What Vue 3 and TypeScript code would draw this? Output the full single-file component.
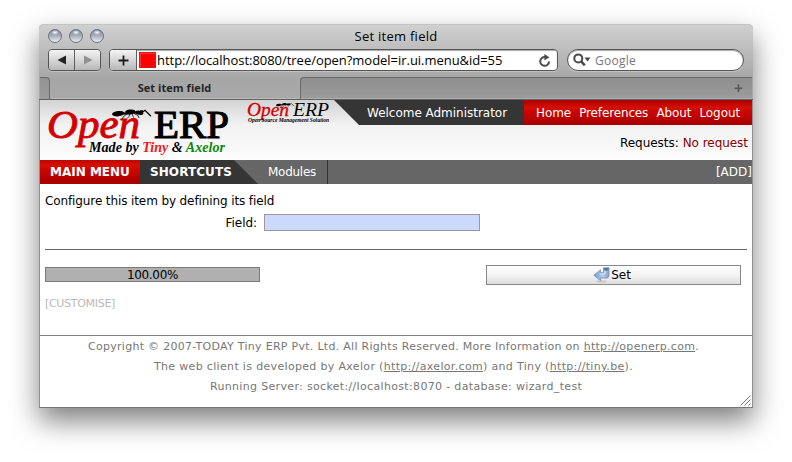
<script setup lang="ts">
import { ref } from 'vue'

interface NavLink { label: string; spacing: string }

const address = 'http://localhost:8080/tree/open?model=ir.ui.menu&id=55'
const links: NavLink[] = [
  { label: 'Home', spacing: 'home' },
  { label: 'Preferences', spacing: 'prefs' },
  { label: 'About', spacing: 'about' },
  { label: 'Logout', spacing: 'logout' },
]
const field = ref('')
const progress = ref(100)
</script>

<template>
  <div class="desktop">
    <div class="window">
      <header class="chrome">
        <div class="titlebar">
          <div class="lights"><i v-for="n in 3" :key="n" class="light"></i></div>
          <div class="title">Set item field</div>
        </div>
        <div class="toolbar">
          <div class="history">
            <button class="tool" aria-label="Back">
              <svg width="10" height="10" viewBox="0 0 10 10"><path d="M9 .6v8.8L.5 5z" fill="#222" /></svg>
            </button>
            <button class="tool forward" aria-label="Forward">
              <svg width="10" height="10" viewBox="0 0 10 10"><path d="M1 .6v8.8L9.5 5z" fill="#929292" /></svg>
            </button>
          </div>
          <div class="location">
            <button class="tool add" aria-label="Add bookmark">
              <svg width="11" height="11" viewBox="0 0 11 11"><path d="M5.5.5v10M.5 5.5h10" stroke="#1c1c1c" stroke-width="1.8" /></svg>
            </button>
            <div class="url">
              <i class="favicon"></i>
              <span class="address">{{ address }}</span>
              <svg class="reload" width="12" height="13" viewBox="0 0 12 13">
                <path d="M10 7.4A4.400 4.400 0 1 1 6.200 3.100" fill="none" stroke="#4d4d4d" stroke-width="2" />
                <path d="M5.400 0l5 3.200-5 3.200z" fill="#4d4d4d" />
              </svg>
            </div>
          </div>
          <div class="search">
            <svg width="18" height="14" viewBox="0 0 18 14">
              <circle cx="5.300" cy="5.400" r="4" fill="none" stroke="#4a4a4a" stroke-width="2" />
              <path d="M8.200 8.400l3.600 4" stroke="#4a4a4a" stroke-width="2.400" />
              <path d="M11.500 4.400h6l-3 4z" fill="#4a4a4a" />
            </svg>
            <span>Google</span>
          </div>
        </div>
        <div class="tabs">
          <div class="tab-edge"></div>
          <div class="tab">Set item field</div>
          <div class="tab-rest">
            <svg width="9" height="9" viewBox="0 0 9 9"><path d="M4.500 1v8M.5 5h8" stroke="#c4c4c4" stroke-width="2" /><path d="M4.500.5v8M.5 4.500h8" stroke="#585858" stroke-width="2" /></svg>
          </div>
        </div>
      </header>

      <section class="banner">
        <svg class="logo" width="294" height="60" viewBox="0 0 294 60">
          <g class="serif">
            <text x="7" y="38" class="big open" textLength="93" lengthAdjust="spacingAndGlyphs">Open</text>
            <text x="114" y="38" class="big erp" textLength="75" lengthAdjust="spacingAndGlyphs">ERP</text>
            <text x="49" y="52" class="made" textLength="136" lengthAdjust="spacingAndGlyphs">Made by <tspan fill="#f01818">Tiny</tspan> &amp; <tspan fill="#0a8a0a">Axelor</tspan></text>
            <text x="207" y="16" class="small open" textLength="42" lengthAdjust="spacingAndGlyphs">Open</text>
            <text x="253" y="16" class="small" textLength="36" lengthAdjust="spacingAndGlyphs">ERP</text>
            <text x="208" y="22" class="tagline" textLength="81" lengthAdjust="spacingAndGlyphs">Open Source Management Solution</text>
          </g>
          <defs>
            <g id="ant">
              <ellipse cx="6.200" cy="4.200" rx="6.200" ry="2.700" transform="rotate(-6 6 4)" />
              <ellipse cx="18.300" cy="2.500" rx="5.200" ry="2.500" transform="rotate(-5 18 2.500)" />
              <ellipse cx="27.300" cy="3.200" rx="4.200" ry="2.100" transform="rotate(10 27 3)" />
              <path d="M11 4h4M22 3h3" fill="none" stroke="#000" stroke-width="2" />
              <path d="M29 3.800l4-3 6 6M28 1.500h3" fill="none" stroke="#000" stroke-width="1.300" />
              <path d="M16 4l-4 2.500-2 3M18 4l-1 3-2 2M20 4l1.500 4M22 4l4 2 1 2.500" fill="none" stroke="#000" stroke-width=".8" />
            </g>
          </defs>
          <use href="#ant" transform="translate(72 9.500)" />
          <use href="#ant" transform="translate(236 3) scale(.46)" />
        </svg>
        <div class="account">
          <div class="top-row">
            <div class="welcome">Welcome Administrator</div>
            <nav class="links"><a v-for="l in links" :key="l.label" :class="l.spacing">{{ l.label }}</a></nav>
          </div>
          <div class="requests"><span>Requests:</span><a>No request</a></div>
        </div>
      </section>

      <nav class="menu">
        <div class="main-menu">MAIN MENU</div>
        <div class="shortcuts">SHORTCUTS</div>
        <div class="modules">Modules</div>
        <div class="add-link">[ADD]</div>
      </nav>

      <main class="content">
        <p class="intro">Configure this item by defining its field</p>
        <div class="form-row">
          <label for="field">Field:</label>
          <input id="field" v-model="field" type="text" />
        </div>
        <hr />
        <div class="actions">
          <div class="progress"><div class="bar" :style="{ width: progress + '%' }">{{ progress.toFixed(2) }}%</div></div>
          <button class="set">
            <svg width="17" height="16" viewBox="0 0 17 16">
              <defs><linearGradient id="arrow" x1="0" y1="0" x2="1" y2="0"><stop offset="0" stop-color="#6f9ccd" /><stop offset=".6" stop-color="#b3cde8" /><stop offset="1" stop-color="#7fa3cb" /></linearGradient></defs>
              <ellipse cx="8.500" cy="14.500" rx="5.500" ry="1.300" fill="#ccc" />
              <path d="M10.500.8h5.500v8.400l-1.500 1.800H7.500v2.600L.8 8.200 7.500 2.900v2.800h3z" fill="url(#arrow)" stroke="#6d8fb5" stroke-width=".8" />
              <path d="M10.800 1h5l-.8 2.600h-3.700z" fill="#54779f" />
              <path d="M12 4v3H7" fill="none" stroke="#dceaf7" stroke-width="1" />
            </svg>
            <span>Set</span>
          </button>
        </div>
        <a class="customise">[CUSTOMISE]</a>
      </main>

      <footer class="footer">
        <div class="copy">Copyright © 2007-TODAY Tiny ERP Pvt. Ltd. All Rights Reserved. More Information on <a>http://openerp.com</a>.</div>
        <div class="dev">The web client is developed by Axelor (<a>http://axelor.com</a>) and Tiny (<a>http://tiny.be</a>).</div>
        <div class="server">Running Server: socket://localhost:8070 - database: wizard_test</div>
        <svg class="grip" width="11" height="11" viewBox="0 0 11 11"><path d="M.5 10.500l10-10M4.500 10.500l6-6M8.500 10.500l2-2" stroke="#777" stroke-width="1" /></svg>
      </footer>
    </div>
  </div>
</template>

<style>
body { background: #fff; overflow: hidden; }
</style>

<style scoped>
* { box-sizing: border-box; }
.desktop { width: 792px; height: 462px; padding: 24px 39px 0; overflow: hidden; }
.window {
  width: 714px; height: 384px; display: flex; flex-direction: column;
  border: 1px solid #919191; border-top: 0; border-bottom-color: #777;
  border-radius: 5px 5px 0 0; background: #fff; color: #000;
  font: 12px/16px "DejaVu Sans", sans-serif;
  box-shadow: 0 13px 28px rgba(0, 0, 0, .5);
}
.chrome {
  height: 76px; margin: 0 -1px; padding: 0 1px; font-family: "Open Sans", sans-serif;
  background: linear-gradient(#d0d0d0, #a6a6a6 54px, #a9a9a9);
  border-top: 1px solid #c4c4c4; border-bottom: 1px solid #626262;
  border-radius: 5px 5px 0 0; flex: none;
}
.titlebar { height: 24px; display: grid; grid-template-columns: 64px 1fr 64px; align-items: center; }
.lights { display: flex; gap: 7px; padding: 0 0 2px 8px; }
.light {
  width: 14px; height: 14px; flex: none; border-radius: 50%; border: 1px solid #6b7482;
  background: radial-gradient(ellipse 4px 2.5px at 50% 20%, #fff 0, rgba(255,255,255,0) 100%), linear-gradient(#7b8492, #a4acb8 45%, #e9eef5);
}
.title { text-align: center; font-size: 13px; letter-spacing: .26px; line-height: 22px; padding: 0 0 2px; }
.toolbar { height: 28px; display: flex; align-items: flex-start; padding-left: 8px; }
.history { display: flex; width: 53px; height: 22px; border: 1px solid #555; border-radius: 4px; overflow: hidden; box-shadow: 0 1px #c3c3c3; }
.tool { flex: 1; border: 0; padding: 0; display: flex; align-items: center; justify-content: center; background: linear-gradient(#f4f4f4, #b8b8b8); }
.forward { border-left: 1px solid #5e5e5e; }
.location { display: flex; width: 449px; height: 22px; margin-left: 8px; border: 1px solid #555; border-radius: 4px; overflow: hidden; background: #fff; box-shadow: 0 1px #c3c3c3; }
.add { flex: 0 0 27px; border-right: 1px solid #5e5e5e; }
.url { flex: 1; display: flex; align-items: center; padding: 0 6px 0 2px; box-shadow: inset 0 1px 1px #aaa; }
.favicon { width: 17px; height: 16px; background: red; border: 1px solid #d91a1a; box-shadow: inset 1px 1px #f33; }
.address { margin-left: 1px; font-size: 13px; letter-spacing: -.035px; line-height: 19px; white-space: nowrap; }
.reload { margin-left: auto; }
.search { display: flex; align-items: center; width: 177px; height: 22px; margin-left: 9px; padding-left: 5px; gap: 4px; border: 1px solid #555; border-radius: 11px; background: #fff; color: #777; font-size: 12px; line-height: 18px; letter-spacing: .25px; box-shadow: 0 1px #c3c3c3, inset 0 1px 1px #aaa; }
.search span { padding-top: 2px; }
.tabs { height: 22px; display: flex; }
.tab-edge { width: 10px; background: linear-gradient(#929292, #9c9c9c); border: 1px solid #6a6a6a; border-width: 1px 1px 0 0; border-radius: 0 4px 0 0; }
.tab { width: 250px; text-align: center; font-weight: 700; font-size: 11px; letter-spacing: .05px; line-height: 22px; color: #262626; border-bottom: 1px solid #bababa; border-radius: 0 0 5px 5px; padding-right: 1px; }
.tab-rest { flex: 1; display: flex; justify-content: flex-end; align-items: center; padding-right: 9px; background: linear-gradient(#8e8e8e, #9c9c9c); border: solid #6a6a6a; border-width: 1px 0 0 1px; border-radius: 4px 0 0 0; box-shadow: inset 0 -1px #aeaeae; }
.banner { height: 60px; flex: none; display: flex; background: linear-gradient(#d3d3d3, #f2f2f2 25px, #fcfcfc); }
.logo { flex: none; overflow: visible; }
.serif { font-family: "Liberation Serif", serif; }
.big { font-size: 41px; }
.open { fill: #d40000; stroke: #d40000; stroke-width: .9px; font-style: italic; }
.erp { stroke: #000; stroke-width: 1.2px; }
.made { font-size: 14px; font-style: italic; font-weight: bold; }
.small { font-size: 19px; font-style: italic; }
.small.open { stroke-width: .3px; }
.tagline { font-size: 5.500px; font-style: italic; font-weight: bold; }
.account { flex: 1; display: flex; flex-direction: column; }
.top-row { height: 25px; display: flex; color: #fff; line-height: 26px; }
.welcome { width: 190px; background: #353535; clip-path: polygon(0 0, 100% 0, 100% 100%, 25px 100%); padding-left: 33px; letter-spacing: -.02px; }
.links { flex: 1; display: flex; justify-content: space-between; padding: 0 12px 0 12px; background: linear-gradient(#a80000, #d51000 8px, #cc0500 11px, #aa0000 24px); }
.home { letter-spacing: -.1px; }
.prefs { letter-spacing: -.14px; }
.about { letter-spacing: -.1px; }
.logout { letter-spacing: -.1px; }
.requests { flex: 1; display: flex; justify-content: flex-end; gap: 4px; line-height: 36px; padding-right: 4px; letter-spacing: -.04px; }
.requests a { color: #8b0000; }
.menu { height: 24px; flex: none; display: flex; background: #666; color: #fff; line-height: 24px; }
.main-menu { width: 100px; padding-left: 10px; font-weight: bold; background: linear-gradient(#bb0500, #d51000 5px, #cc0500 10px, #aa0000 22px); }
.shortcuts { width: 118px; padding-left: 10px; font-weight: bold; letter-spacing: .08px; background: #353535; clip-path: polygon(0 0, 94px 0, 100% 100%, 0 100%); }
.modules { width: 70px; padding-left: 10px; letter-spacing: -.27px; border-right: 1px solid #333; }
.add-link { margin-left: auto; }
.content { height: 151px; flex: none; padding: 9px 5px 0; display: flex; flex-direction: column; align-items: flex-start; }
.intro { margin: 0; letter-spacing: -.11px; line-height: 16px; }
.form-row { display: flex; align-items: center; margin-top: 5px; height: 17px; }
.form-row label { width: 212px; text-align: right; letter-spacing: -.05px; }
.form-row input { width: 216px; height: 17px; margin: 0 0 0 7px; padding: 0 2px; border: 1px solid #999; background: #ccd9ff; outline: 0; }
hr { width: 702px; height: 1px; margin: 18px 0 0; border: 0; background: #666; }
.actions { display: flex; align-items: flex-start; width: 100%; height: 20px; margin-top: 15px; }
.progress { width: 215px; height: 15px; margin-top: 2px; border: 1px solid #7b7b7b; }
.bar { height: 100%; background: #b0b0b0; text-align: center; line-height: 15px; letter-spacing: -.34px; }
.set { width: 255px; height: 20px; margin-left: 226px; padding: 0 3px 0 0; display: flex; align-items: center; justify-content: center; gap: 1px; border: 1px solid #888; background: linear-gradient(#fff, #f4f4f4 50%, #ddd); font: 12px/16px "DejaVu Sans", sans-serif; color: #000; }
.customise { margin-top: 11px; font-size: 11px; line-height: 16px; letter-spacing: -.3px; color: #b9b9b9; }
.footer { position: relative; flex: 1; border-top: 1px solid #808080; text-align: center; font-size: 11px; line-height: 20px; color: #777; padding: 1px 5px 0 0; }
.footer a { text-decoration: underline; }
.copy { letter-spacing: .286px; }
.dev { letter-spacing: .332px; }
.server { letter-spacing: .335px; padding-left: 5px; }
.grip { position: absolute; right: 1px; bottom: 1px; }
</style>
